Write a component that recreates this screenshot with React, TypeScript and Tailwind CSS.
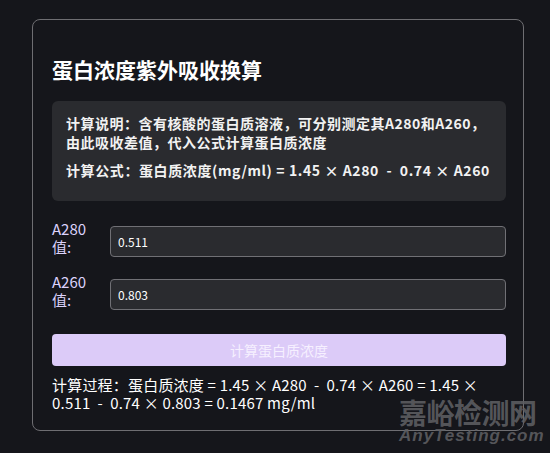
import { useState } from "react";

const font = { fontFamily: '"Noto Sans CJK SC", "Noto Sans", sans-serif' };

export default function App() {
  const [a280, setA280] = useState("0.511");
  const [a260, setA260] = useState("0.803");

  const result = (1.45 * parseFloat(a280) - 0.74 * parseFloat(a260)).toFixed(4);

  return (
    <div className="relative min-h-screen w-full overflow-hidden bg-[#15161b] pt-[19px] pl-[32px]" style={font}>
      <div className="w-[492px] h-[412px] rounded-lg border border-[#6e6e72] pl-[19px] pr-[17px] pt-[35px]">
        <h1 className="text-[21px] font-bold leading-[28px] text-white">蛋白浓度紫外吸收换算</h1>

        <div className="mt-[18px] rounded-md bg-[#2a2b2f] px-[14px] pt-[13px] pb-[21px] text-[14px] font-bold leading-[19px] text-[#f2f2f2]">
          <p className="tracking-[0.5px]">计算说明：含有核酸的蛋白质溶液，可分别测定其A280和A260，由此吸收差值，代入公式计算蛋白质浓度</p>
          <p className="mt-[9px] whitespace-nowrap tracking-[0.6px]">计算公式：蛋白质浓度(mg/ml) = 1.45 × A280 &nbsp;- &nbsp;0.74 × A260</p>
        </div>

        <div className="mt-[19px] flex flex-col gap-[16px]">
          <div className="flex items-start">
            <label className="w-[58px] shrink-0 text-[15px] leading-[18px] text-[#dcd2fb]">
              A280<br />值:
            </label>
            <input
              value={a280}
              onChange={(e) => setA280(e.target.value)}
              className="mt-[6px] h-[31px] flex-1 rounded border border-[#707075] bg-[#2a2b2f] px-[7px] text-[12px] text-white outline-none"
            />
          </div>
          <div className="flex items-start">
            <label className="w-[58px] shrink-0 text-[15px] leading-[18px] text-[#dcd2fb]">
              A260<br />值:
            </label>
            <input
              value={a260}
              onChange={(e) => setA260(e.target.value)}
              className="mt-[6px] h-[31px] flex-1 rounded border border-[#707075] bg-[#2a2b2f] px-[7px] text-[12px] text-white outline-none"
            />
          </div>
        </div>

        <button className="mt-[24px] h-[32px] w-full rounded bg-[#dccbf8] text-[14px] text-[#f6f0ff]">
          计算蛋白质浓度
        </button>

        <p className="mt-[10px] text-[15px] leading-[18px] tracking-[0.2px] text-white">
          计算过程：蛋白质浓度 = 1.45 × A280 &nbsp;- &nbsp;0.74 × A260 = 1.45 × {a280} &nbsp;- &nbsp;0.74 × {a260} = {result} mg/ml
        </p>
      </div>

      <div className="pointer-events-none absolute left-[399px] top-[396px] flex flex-col items-start">
        <span className="text-[28px] font-bold leading-[32px] tracking-[-0.5px] text-[#5e5e62]/90">嘉峪检测网</span>
        <span className="-mt-[2px] text-[17px] font-bold italic leading-[20px] tracking-[1px] text-[#5e5e62]/90" style={{ fontFamily: '"Liberation Sans", sans-serif' }}>
          AnyTesting.com
        </span>
      </div>
    </div>
  );
}
